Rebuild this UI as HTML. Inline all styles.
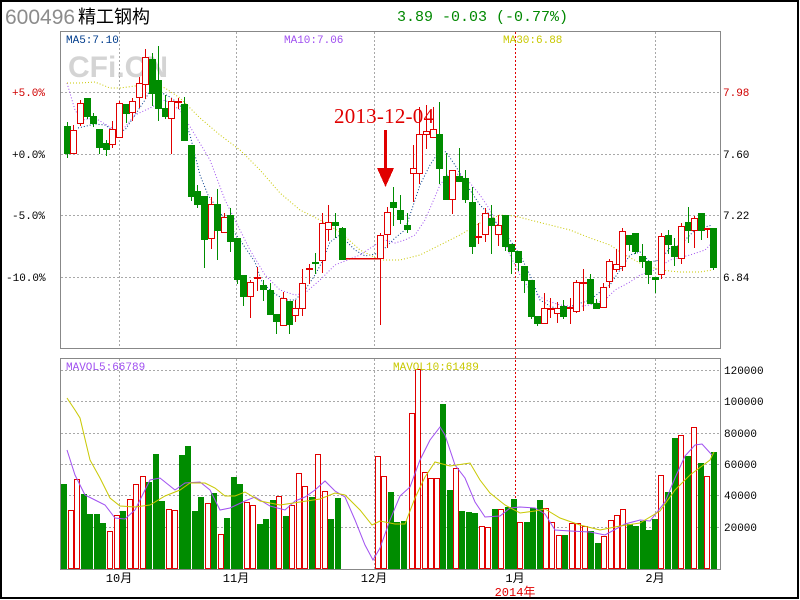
<!DOCTYPE html>
<html><head><meta charset="utf-8"><style>
body{margin:0;background:#fff;}
svg{display:block}
text{font-family:"Liberation Mono","Noto Sans CJK SC",monospace;}
</style></head><body>
<svg id="s" width="800" height="600" xmlns="http://www.w3.org/2000/svg" shape-rendering="crispEdges">
<rect x="0" y="0" width="800" height="600" fill="#fff"/>
<rect x="1" y="1" width="797" height="597" fill="none" stroke="#000" stroke-width="2"/>
<text x="5" y="24" font-family="Liberation Sans,sans-serif" font-size="21" fill="#8c8c8c" style="font-family:'Liberation Sans',sans-serif">600496</text>
<text x="78" y="23" font-size="18" fill="#000" style="font-family:'Liberation Sans','Noto Sans CJK SC',sans-serif">精工钢构</text>
<text x="397" y="21" font-size="15" fill="#008800">3.89 -0.03 (-0.77%)</text>
<text x="68" y="77" font-size="30" font-weight="bold" fill="#d4d4d4" style="font-family:'Liberation Sans',sans-serif">CFi.CN</text>
<g id="grid" stroke="#a8a8a8" stroke-width="1" stroke-dasharray="2,2" fill="none"></g>
<rect x="60.5" y="31.5" width="660" height="317" fill="none" stroke="#888"/>
<rect x="60.5" y="358.5" width="660" height="211" fill="none" stroke="#888"/>
<g id="ma" fill="none" shape-rendering="auto"></g>
<g id="c"></g>
<g id="v"></g>
<g id="vm" fill="none" shape-rendering="auto"></g>
<text x="66" y="43" font-size="11" fill="#003c8c">MA5:7.10</text>
<text x="284" y="43" font-size="11" fill="#a050f0">MA10:7.06</text>
<text x="503" y="43" font-size="11" fill="#c8c800">MA30:6.88</text>
<text x="66" y="370" font-size="11" fill="#a050f0">MAVOL5:66789</text>
<text x="393" y="370" font-size="11" fill="#c8c800">MAVOL10:61489</text>
<g font-size="11" fill="#d00000">
<text x="12" y="96">+5.0%</text>
<text x="723" y="96">7.98</text>
</g>
<g font-size="11" fill="#000">
<text x="12" y="158">+0.0%</text><text x="12" y="219">-5.0%</text><text x="6" y="281">-10.0%</text>
<text x="723" y="158">7.60</text><text x="723" y="219">7.22</text><text x="723" y="281">6.84</text>
<text x="724" y="374">120000</text><text x="724" y="405">100000</text><text x="724" y="437">80000</text>
<text x="724" y="468">60000</text><text x="724" y="499">40000</text><text x="724" y="531">20000</text>
</g>
<g font-size="12" fill="#000" text-anchor="middle" style="font-family:'Liberation Mono','Noto Sans CJK SC',monospace">
<text x="119" y="582">10月</text><text x="236" y="582">11月</text><text x="374" y="582">12月</text><text x="515" y="582">1月</text><text x="655" y="582">2月</text>
</g>
<text x="515" y="596" font-size="12" fill="#e00000" text-anchor="middle" style="font-family:'Liberation Mono','Noto Sans CJK SC',monospace">2014年</text>
<text x="334" y="123" font-size="21" fill="#e00000" style="font-family:'Liberation Serif',serif" textLength="100">2013-12-04</text>
<rect x="384" y="130" width="3" height="40" fill="#e00000"/>
<polygon points="377,168 394,168 385.5,187" fill="#e00000"/>
</svg>
<script>
var NS="http://www.w3.org/2000/svg";
function el(p,t,a){var e=document.createElementNS(NS,t);for(var k in a)e.setAttribute(k,a[k]);document.getElementById(p).appendChild(e);return e;}
[119,236,374,655].forEach(function(x){el("grid","line",{x1:x+.5,y1:32,x2:x+.5,y2:348});el("grid","line",{x1:x+.5,y1:359,x2:x+.5,y2:569});});
el("grid","line",{x1:515.5,y1:32,x2:515.5,y2:569,stroke:"#e00000"});
[92,154,215,277].forEach(function(y){el("grid","line",{x1:61,y1:y+.5,x2:720,y2:y+.5});});
[370,401,433,464,495,527].forEach(function(y){el("grid","line",{x1:61,y1:y+.5,x2:720,y2:y+.5});});
var C=[[67,126,153,122,157,'g'],[73,130,153,125,153,'r'],[80,103,123,100,125,'r'],[87,98,116,98,118,'g'],[93,116,123,113,126,'g'],[99,129,147,129,153,'g'],[106,143,149,140,155,'g'],[112,129,144,121,147,'r'],[119,103,137,101,137,'r'],[126,104,113,104,122,'g'],[132,101,112,98,120,'r'],[139,83,97,77,107,'r'],[145,57,84,49,98,'r'],[152,59,93,53,105,'g'],[158,80,108,46,120,'g'],[165,108,116,95,118,'g'],[171,101,118,98,153,'r'],[178,101,103,98,108,'r'],[184,104,140,97,140,'g'],[191,145,196,145,200,'g'],[197,191,204,185,207,'g'],[204,196,239,196,267,'g'],[211,204,238,197,248,'r'],[217,204,230,189,259,'g'],[224,217,232,213,232,'r'],[230,215,241,208,251,'g'],[237,238,279,238,283,'g'],[243,275,296,275,305,'g'],[250,282,296,280,317,'r'],[257,277,279,267,290,'r'],[263,285,289,280,300,'g'],[270,290,314,283,314,'g'],[276,314,321,314,333,'g'],[283,298,325,292,325,'r'],[289,301,324,301,333,'g'],[295,308,315,300,321,'r'],[302,283,308,269,315,'r'],[309,268,268,264,283,'r'],[315,262,263,253,273,'g'],[322,223,260,213,272,'r'],[328,222,229,205,240,'r'],[335,222,225,213,237,'g'],[342,228,259,227,259,'g'],[380,235,258,233,324,'r'],[387,212,234,207,247,'r'],[393,202,207,187,225,'g'],[400,210,219,195,223,'g'],[407,225,229,213,232,'g'],[413,168,173,145,201,'r'],[419,134,173,107,183,'r'],[426,131,134,105,148,'r'],[433,129,137,107,137,'r'],[439,134,168,102,183,'g'],[446,176,199,153,199,'g'],[452,170,199,170,213,'r'],[459,176,181,148,181,'g'],[465,178,199,170,202,'g'],[472,202,246,187,253,'g'],[478,236,237,223,243,'r'],[485,213,234,208,241,'r'],[491,218,225,205,253,'g'],[498,225,234,215,245,'r'],[505,215,246,215,250,'g'],[511,244,251,244,273,'g'],[518,251,262,251,270,'g'],[524,266,280,266,292,'g'],[531,280,316,280,318,'g'],[537,316,323,316,325,'g'],[544,308,323,293,323,'r'],[550,308,309,298,317,'r'],[557,308,313,302,322,'r'],[563,306,316,300,318,'g'],[570,307,308,298,323,'r'],[576,282,311,280,312,'r'],[583,282,283,269,310,'r'],[590,279,303,274,303,'g'],[596,303,308,299,308,'g'],[603,287,307,283,307,'r'],[609,261,281,259,287,'r'],[616,264,269,249,271,'r'],[622,231,266,228,270,'r'],[629,235,244,235,250,'g'],[635,233,251,233,253,'g'],[642,256,261,244,267,'g'],[648,261,274,261,283,'g'],[655,277,279,277,292,'g'],[661,236,274,233,278,'r'],[668,235,244,230,253,'g'],[674,246,256,238,265,'g'],[681,226,258,223,263,'r'],[688,222,230,207,242,'g'],[694,218,230,216,247,'r'],[701,213,230,213,239,'g'],[707,228,230,228,237,'r'],[713,228,267,228,269,'g']];
var G="#008c00",R="#e00000";
el("c","rect",{x:345,y:258,width:35,height:1.5,fill:R});
C.forEach(function(c){var x=c[0],col=c[5]=='g'?G:R;
el("c","rect",{x:x,y:c[3],width:1,height:c[4]-c[3]+1,fill:col});
var h=Math.max(c[2]-c[1],1);
if(c[5]=='g')el("c","rect",{x:x-3,y:c[1],width:7,height:h+1,fill:G});
else if(h<=2)el("c","rect",{x:x-3,y:c[1],width:7,height:2,fill:R});
else el("c","rect",{x:x-2.5,y:c[1]+.5,width:6,height:h,fill:"#fff",stroke:R});
});
var V=[[64,484,'g'],[71,510,'r'],[77,479,'r'],[84,494,'g'],[90,514,'g'],[97,514,'g'],[103,523,'g'],[110,531,'r'],[117,515,'r'],[123,511,'g'],[130,499,'r'],[136,484,'r'],[143,476,'r'],[149,482,'g'],[156,454,'g'],[162,501,'g'],[169,509,'r'],[175,510,'r'],[182,455,'g'],[188,446,'g'],[195,511,'g'],[201,497,'g'],[208,503,'r'],[214,493,'g'],[221,534,'r'],[227,518,'g'],[234,477,'g'],[240,484,'g'],[247,502,'r'],[253,505,'r'],[260,524,'g'],[266,519,'g'],[273,500,'g'],[279,496,'r'],[286,516,'g'],[292,505,'r'],[299,473,'r'],[305,486,'r'],[312,497,'g'],[318,454,'r'],[325,491,'r'],[331,519,'g'],[338,498,'g'],[378,456,'r'],[384,476,'r'],[391,492,'g'],[397,522,'g'],[404,521,'g'],[412,413,'r'],[418,369,'r'],[425,472,'r'],[431,478,'r'],[437,478,'r'],[443,404,'g'],[450,490,'g'],[456,468,'r'],[462,511,'g'],[469,512,'g'],[475,513,'g'],[482,526,'r'],[488,527,'r'],[495,509,'g'],[501,509,'r'],[508,507,'g'],[514,499,'g'],[520,522,'r'],[527,522,'g'],[533,508,'g'],[540,500,'g'],[546,508,'r'],[552,522,'r'],[559,535,'r'],[565,535,'g'],[572,523,'r'],[578,523,'r'],[585,526,'r'],[591,531,'g'],[598,543,'g'],[604,536,'r'],[611,520,'r'],[617,515,'r'],[623,509,'r'],[630,524,'g'],[636,526,'g'],[643,521,'g'],[649,530,'g'],[655,519,'g'],[661,475,'r'],[668,492,'g'],[675,438,'g'],[681,435,'r'],[688,456,'g'],[694,427,'r'],[701,463,'g'],[707,476,'r'],[714,452,'g']];
V.forEach(function(b){if(b[2]=='g')el("v","rect",{x:b[0]-3,y:b[1],width:6,height:569-b[1],fill:G});
else el("v","rect",{x:b[0]-2.5,y:b[1]+.5,width:5,height:568-b[1],fill:"#fff",stroke:R});});
function pl(p,pts,col,dash){var a={points:pts.map(function(q){return q.join(",")}).join(" "),stroke:col,"stroke-width":1};if(dash)a["stroke-dasharray"]="1,2";el(p,"polyline",a);}
pl("ma",[[78,128],[95,124],[105,125],[115,132],[125,130],[135,115],[145,100],[150,90],[160,92],[170,97],[180,105],[190,135],[200,175],[208,195],[215,205],[225,220],[240,240],[255,262],[262,282],[272,292],[285,300],[295,300],[305,290],[315,275],[322,262],[330,242],[340,235],[355,250],[365,256],[380,253],[395,238],[405,230],[410,215],[420,185],[430,165],[440,150],[446,152],[455,165],[470,190],[480,205],[490,215],[510,240],[520,255],[530,275],[540,300],[550,306],[560,310],[575,305],[590,300],[600,292],[610,285],[620,270],[630,255],[640,252],[650,262],[660,260],[670,248],[680,245],[695,230],[712,225]],"#003c8c",1);
pl("ma",[[67,83],[75,110],[82,120],[95,118],[115,130],[125,127],[135,115],[150,108],[165,100],[180,110],[195,135],[210,160],[225,200],[240,230],[250,250],[265,275],[280,290],[295,295],[305,293],[320,280],[335,265],[360,255],[375,245],[385,240],[395,243],[405,240],[415,235],[425,220],[440,185],[450,172],[460,175],[470,183],[480,195],[490,210],[500,230],[510,255],[520,275],[530,290],[545,300],[560,305],[575,307],[590,305],[605,300],[615,290],[630,282],[640,275],[655,270],[670,260],[690,255],[705,250],[712,243]],"#a050f0",1);
pl("ma",[[67,83],[80,83],[95,82],[110,88],[120,88],[135,86],[150,83],[165,88],[180,98],[190,108],[200,118],[220,135],[240,150],[260,170],[280,193],[300,210],[320,220],[340,232],[360,250],[380,260],[400,260],[420,255],[440,245],[460,235],[480,223],[500,215],[515,216],[530,220],[550,225],[570,230],[590,238],[610,245],[625,255],[640,263],[660,270],[680,272],[700,272],[712,270]],"#c8c800",1);
pl("vm",[[67,450],[75,475],[85,495],[95,500],[105,505],[115,518],[125,519],[135,510],[150,480],[160,478],[175,490],[185,483],[200,482],[210,490],[220,510],[230,508],[245,501],[255,497],[270,506],[285,510],[295,501],[305,497],[315,490],[325,481],[335,491],[345,497],[355,520],[365,545],[373,560],[380,548],[390,520],[400,496],[410,487],[420,460],[430,440],[440,427],[445,435],[455,465],[465,478],[475,502],[485,517],[500,516],[510,508],[520,507],[535,508],[545,514],[555,530],[570,531],[590,532],[605,535],[625,524],[640,520],[650,521],[665,502],[675,478],[685,456],[695,445],[702,444],[712,455]],"#a050f0");
pl("vm",[[67,398],[75,410],[80,418],[90,460],[100,478],[110,498],[120,506],[135,507],[150,505],[165,496],[180,490],[190,483],[205,483],[215,488],[225,496],[235,496],[245,492],[260,501],[280,505],[300,502],[320,499],[335,493],[345,495],[360,510],[372,525],[380,521],[395,524],[405,524],[415,498],[425,477],[435,462],[450,466],[470,463],[480,480],[490,493],[505,505],[520,513],[535,511],[545,509],[560,518],[580,525],[600,530],[620,526],[640,523],[660,511],[675,490],[690,475],[710,460],[714,452]],"#c8c800");
</script>
</body></html>
